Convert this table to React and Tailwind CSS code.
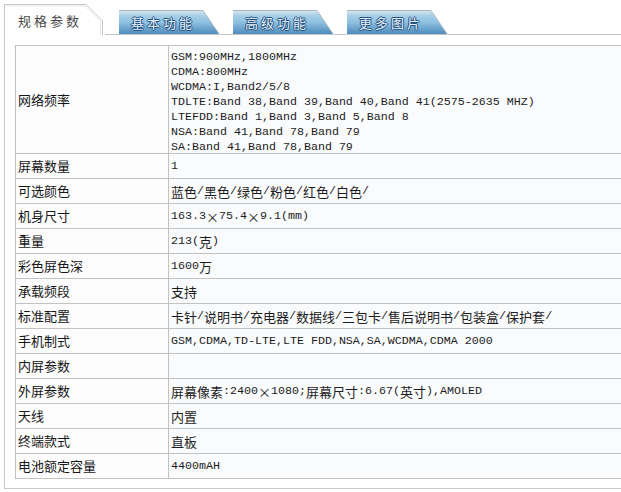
import React from 'react';

const freqLines = [
  'GSM:900MHz,1800MHz',
  'CDMA:800MHz',
  'WCDMA:I,Band2/5/8',
  'TDLTE:Band 38,Band 39,Band 40,Band 41(2575-2635 MHZ)',
  'LTEFDD:Band 1,Band 3,Band 5,Band 8',
  'NSA:Band 41,Band 78,Band 79',
  'SA:Band 41,Band 78,Band 79',
];

const rows = [
  ['屏幕数量', '1'],
  ['可选颜色', '蓝色/黑色/绿色/粉色/红色/白色/'],
  ['机身尺寸', '163.3×75.4×9.1(mm)'],
  ['重量', '213(克)'],
  ['彩色屏色深', '1600万'],
  ['承载频段', '支持'],
  ['标准配置', '卡针/说明书/充电器/数据线/三包卡/售后说明书/包装盒/保护套/'],
  ['手机制式', 'GSM,CDMA,TD-LTE,LTE FDD,NSA,SA,WCDMA,CDMA 2000'],
  ['内屏参数', ''],
  ['外屏参数', '屏幕像素:2400×1080;屏幕尺寸:6.67(英寸),AMOLED'],
  ['天线', '内置'],
  ['终端款式', '直板'],
  ['电池额定容量', '4400mAH'],
];

// SimSun-like look: CJK glyphs full width, latin glyphs half width
const Mixed = ({ text }) => {
  const parts = text.split(/([\u2E80-\u9FFF\u3000-\u303F\uFF00-\uFFEF×]+)/);
  return parts.map((p, i) =>
    p === '' ? null : i % 2 ? (
      <span key={i} className="font-['Noto_Sans_CJK_SC',sans-serif] text-[13px]">{p}</span>
    ) : (
      <span key={i} className="font-['Liberation_Mono',monospace] text-[11.67px] whitespace-pre">{p}</span>
    )
  );
};

const Tab = ({ label, id }) => (
  <div className="relative w-[100px] h-[24px] flex items-center pl-[12px]">
    <svg className="absolute inset-0" width="100" height="24" viewBox="0 0 100 24">
      <defs>
        <linearGradient id={id} x1="0" y1="0" x2="0" y2="1">
          <stop offset="0" stopColor="#d3e5f1" />
          <stop offset="0.2" stopColor="#a9cfe7" />
          <stop offset="0.5" stopColor="#8dbfe0" />
          <stop offset="1" stopColor="#4e8bbb" />
        </linearGradient>
      </defs>
      <path d="M0,24 V1 H84 L100,24 Z" fill={`url(#${id})`} />
      <path d="M0,0.5 H84 L99.5,23" fill="none" stroke="#a9b4bd" strokeWidth="1" />
    </svg>
    <span className="relative font-['Noto_Sans_CJK_SC',sans-serif] text-[13px] tracking-[3px] leading-none text-[#e4f0f9] [text-shadow:1px_0_#23507e,-1px_0_#23507e,0_1px_#23507e,0_-1px_#23507e]">
      {label}
    </span>
  </div>
);

export default function App() {
  return (
    <div className="w-[621px] h-[492px] overflow-hidden bg-white pt-[4px] pl-[4px]">
      <div className="w-[660px] border-l border-b border-[#c9c9c9]">
        <div className="flex h-[31px]">
          <div className="relative w-[100px] h-[31px] flex items-center pl-[13px] pt-[1px]">
            <svg className="absolute inset-0" width="100" height="31" viewBox="0 0 100 31">
              <path d="M0,0.5 H81 L97.5,17 V31" fill="none" stroke="#c6c6c6" strokeWidth="1" />
              <path d="M0,2 H80 L95.5,17.5 V31" fill="none" stroke="#e6e6e6" strokeWidth="1" />
            </svg>
            <span className="relative font-['Noto_Sans_CJK_SC',sans-serif] text-[13px] tracking-[3px] leading-none text-[#4a4a4a]">
              规格参数
            </span>
          </div>
          <div className="flex-1 flex items-end gap-[14px] pl-[14px] border-b border-[#c4c4c4]">
            <Tab label="基本功能" id="g1" />
            <Tab label="高级功能" id="g2" />
            <Tab label="更多图片" id="g3" />
          </div>
        </div>
        <div className="pt-[10px] pb-[9px] pl-[10px]">
          <div className="w-[640px] border-t border-l border-[#c2c2c2] bg-[#fafbfd]">
            <div className="flex h-[108px] border-b border-[#c2c2c2]">
              <div className="w-[153px] border-r border-[#c2c2c2] pl-[2px] flex items-center bg-[#fdfdfd] font-['Noto_Sans_CJK_SC',sans-serif] text-[13px] text-[#161616]">
                网络频率
              </div>
              <div className="flex-1 pl-[2px] pt-[1px] leading-[15px] text-[#1c1c1c]">
                {freqLines.map((l) => (
                  <div key={l} className="h-[15px]">
                    <Mixed text={l} />
                  </div>
                ))}
              </div>
            </div>
            {rows.map(([k, v]) => (
              <div key={k} className="flex h-[25px] border-b border-[#c2c2c2]">
                <div className="w-[153px] border-r border-[#c2c2c2] pl-[2px] flex items-center bg-[#fdfdfd] font-['Noto_Sans_CJK_SC',sans-serif] text-[13px] text-[#161616]">
                  {k}
                </div>
                <div className="flex-1 pl-[2px] flex items-center leading-[15px] text-[#1c1c1c]">
                  <Mixed text={v} />
                </div>
              </div>
            ))}
          </div>
        </div>
      </div>
    </div>
  );
}
